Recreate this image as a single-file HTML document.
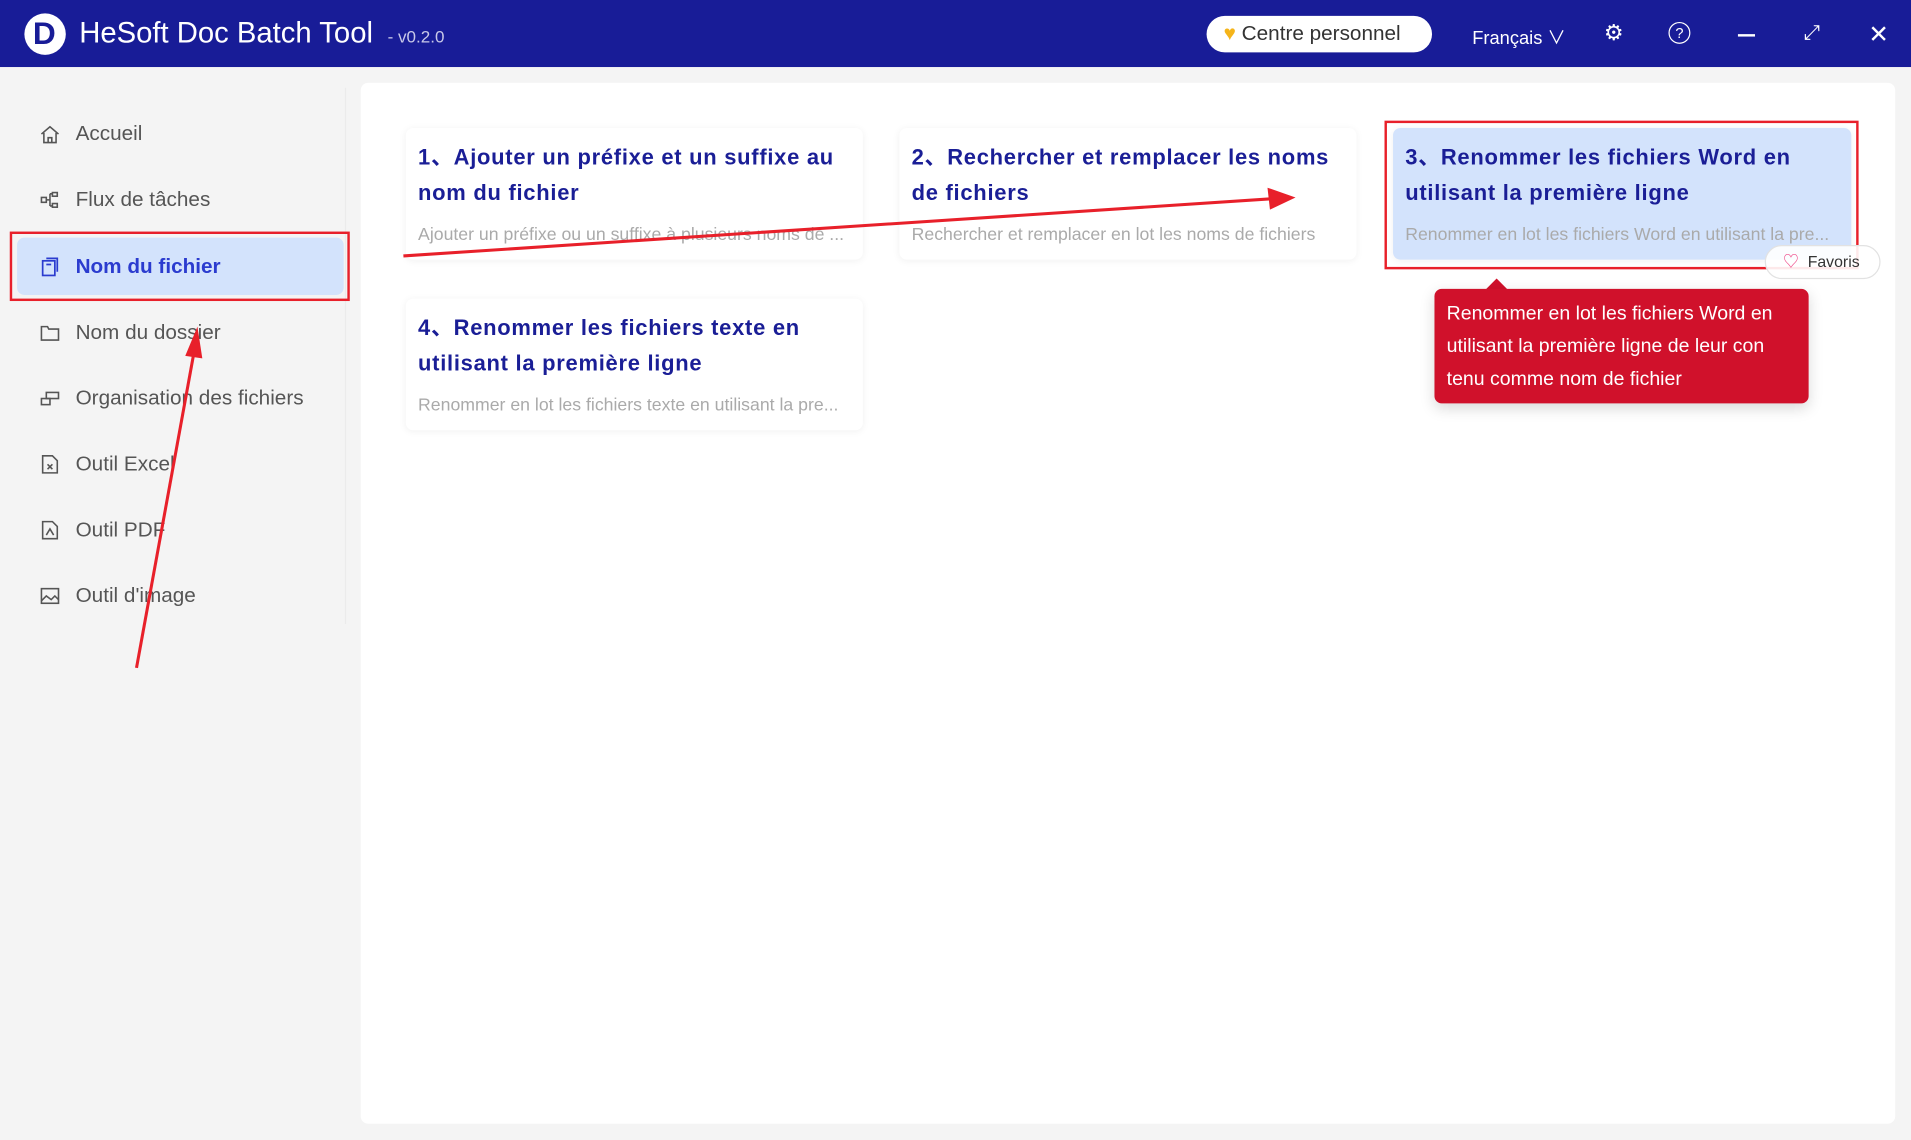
<!DOCTYPE html>
<html><head><meta charset="utf-8"><style>
html,body{margin:0;padding:0;width:1911px;height:1140px;overflow:hidden;background:#f3f3f3;font-family:"Liberation Sans","Noto Sans CJK SC",sans-serif}
#w{position:absolute;left:0;top:0;width:1568px;height:935px;transform:scale(1.21875);transform-origin:0 0;background:#f4f4f4}
.abs{position:absolute}
.hdr{left:0;top:0;width:1568px;height:55px;background:#181c97;color:#fff}
.nav{left:32px;font-size:17px;color:#555;display:flex;align-items:center;height:24px}
.nav svg{width:18px;height:18px;margin-right:12px}
.card{background:#fff;border-radius:6px;box-shadow:0 1px 6px rgba(0,0,0,.06);width:375px;height:108px;box-sizing:border-box;padding:10px 10px}
.card h3{margin:0;font-size:18px;line-height:29px;color:#1a1e96;font-weight:bold;letter-spacing:0.6px}
.card p{margin:0;position:absolute;left:10px;top:80px;font-size:14.5px;color:#aaa;white-space:nowrap;overflow:hidden;width:355px;text-overflow:ellipsis}
</style></head><body><div id="w">
<div class="abs hdr">
 <div class="abs" style="left:20px;top:11px;width:34px;height:34px;border-radius:50%;background:#fff"></div>
 <div class="abs" style="left:27px;top:12px;font-size:26px;font-weight:bold;color:#181c97">D</div>
 <div class="abs" style="left:65px;top:14px;font-size:24px">HeSoft Doc Batch Tool</div>
 <div class="abs" style="left:318px;top:22px;font-size:14px;color:#c8c8e8">- v0.2.0</div>
 <div class="abs" style="left:990px;top:13px;width:185px;height:30px;border-radius:15px;background:#fff;color:#333;font-size:17px;line-height:30px"><span style="color:#f5b41a;margin-left:14px">♥</span> Centre personnel</div>
 <div class="abs" style="left:1208px;top:20px;font-size:15px">Français ∨</div>
 <div class="abs" style="left:1316px;top:17px;font-size:18px">⚙</div>
 <div class="abs" style="left:1369px;top:18px;width:16px;height:16px;border:1.5px solid #fff;border-radius:50%;font-size:12px;text-align:center;line-height:16px">?</div>
 <div class="abs" style="left:1426px;top:28px;width:14px;height:1.5px;background:#fff"></div>
 <div class="abs" style="left:1480px;top:17px;font-size:17px">⤢</div>
 <div class="abs" style="left:1533px;top:16px;font-size:20px">✕</div>
</div>
<div class="abs" style="left:283px;top:72px;width:1px;height:440px;background:#ebebeb"></div>
<div class="abs" style="left:14px;top:195px;width:268px;height:47px;background:#d3e3fc;border-radius:6px"></div>
<div class="abs" style="left:8px;top:190px;width:275px;height:53px;border:2px solid #e8202a"></div>
<div class="abs nav" style="top:98px"><svg viewBox="0 0 18 18" fill="none" stroke="#555" stroke-width="1.3"><path d="M2 9L9 3l7 6M4 8v8h10V8M7.5 16v-4h3v4"/></svg>Accueil</div>
<div class="abs nav" style="top:152px"><svg viewBox="0 0 18 18" fill="none" stroke="#555" stroke-width="1.3"><rect x="2" y="7" width="4" height="4"/><rect x="11" y="3" width="4" height="3"/><rect x="11" y="12" width="4" height="3"/><path d="M6 9h3M9 4v10M9 4h2M9 14h2"/></svg>Flux de tâches</div>
<div class="abs nav" style="top:207px;color:#2b3ccf;font-weight:bold"><svg viewBox="0 0 18 18" fill="none" stroke="#2b3ccf" stroke-width="1.4"><rect x="3" y="4" width="10" height="12"/><path d="M6 2h9v11M6 7h4"/></svg>Nom du fichier</div>
<div class="abs nav" style="top:261px"><svg viewBox="0 0 18 18" fill="none" stroke="#555" stroke-width="1.3"><path d="M2 4h5l1 2h8v9H2z"/></svg>Nom du dossier</div>
<div class="abs nav" style="top:315px"><svg viewBox="0 0 18 18" fill="none" stroke="#555" stroke-width="1.3"><rect x="2" y="9" width="7" height="5"/><rect x="6" y="4" width="10" height="5"/></svg>Organisation des fichiers</div>
<div class="abs nav" style="top:369px"><svg viewBox="0 0 18 18" fill="none" stroke="#555" stroke-width="1.3"><path d="M3 2h8l4 4v10H3zM7 9l4 4M11 9l-4 4"/></svg>Outil Excel</div>
<div class="abs nav" style="top:423px"><svg viewBox="0 0 18 18" fill="none" stroke="#555" stroke-width="1.3"><path d="M3 2h8l4 4v10H3zM6 13l3-5 3 5"/></svg>Outil PDF</div>
<div class="abs nav" style="top:477px"><svg viewBox="0 0 18 18" fill="none" stroke="#555" stroke-width="1.3"><rect x="2" y="3" width="14" height="12"/><path d="M2 13l4-4 4 3 3-3 3 3"/></svg>Outil d'image</div>
<div class="abs" style="left:296px;top:68px;width:1259px;height:854px;background:#fff;border-radius:6px"></div>
<div class="abs card" style="left:333px;top:105px"><h3>1、Ajouter un préfixe et un suffixe au nom du fichier</h3><p>Ajouter un préfixe ou un suffixe à plusieurs noms de ...</p></div>
<div class="abs card" style="left:738px;top:105px"><h3>2、Rechercher et remplacer les noms de fichiers</h3><p>Rechercher et remplacer en lot les noms de fichiers</p></div>
<div class="abs card" style="left:1143px;top:105px;background:#d3e3fc;width:376px"><h3>3、Renommer les fichiers Word en utilisant la première ligne</h3><p>Renommer en lot les fichiers Word en utilisant la pre...</p></div>
<div class="abs card" style="left:333px;top:245px"><h3>4、Renommer les fichiers texte en utilisant la première ligne</h3><p>Renommer en lot les fichiers texte en utilisant la pre...</p></div>
<div class="abs" style="left:1136px;top:99px;width:385px;height:118px;border:2px solid #e8202a"></div>
<div class="abs" style="left:1448px;top:201px;width:93px;height:26px;border:1px solid #e2e2e2;border-radius:14px;background:rgba(255,255,255,.9);font-size:13px;color:#333;line-height:26px"><span style="color:#f0508c;margin-left:14px">♡</span>&nbsp; Favoris</div>
<div class="abs" style="left:1222px;top:231px;width:12px;height:12px;background:#d0112b;transform:rotate(45deg)"></div>
<div class="abs" style="left:1177px;top:237px;width:307px;height:94px;background:#d0112b;border-radius:6px;color:#fff;font-size:16px;line-height:27px;padding:7px 10px;box-sizing:border-box;box-shadow:0 4px 12px rgba(0,0,0,.15)">Renommer en lot les fichiers Word en utilisant la première ligne de leur con tenu comme nom de fichier</div>
<svg class="abs" style="left:0;top:0" width="1568" height="935"><g fill="#e8202a" stroke="#e8202a"><line x1="331" y1="210" x2="1045" y2="163" stroke-width="2.5"/><polygon points="1063,162 1040,154 1042,172" stroke="none"/><line x1="112" y1="548" x2="159" y2="290" stroke-width="2.5"/><polygon points="162,268 152,292 166,294" stroke="none"/></g></svg>
</div></body></html>
